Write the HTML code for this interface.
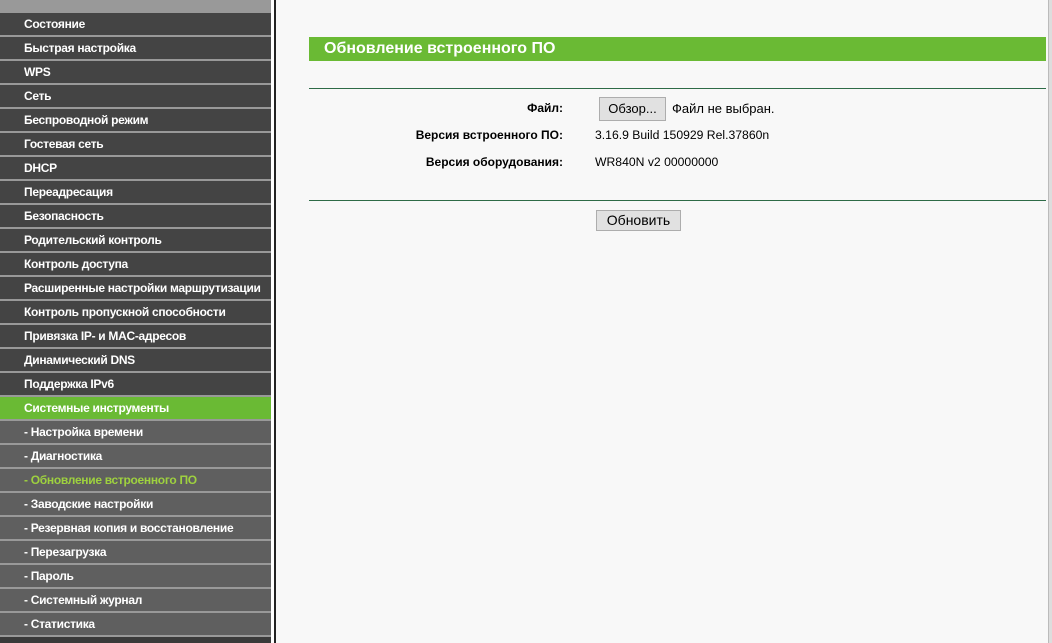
<!DOCTYPE html>
<html style="overflow:hidden;width:1052px;height:643px"><head><meta charset="utf-8"><style>
*{margin:0;padding:0;box-sizing:border-box}
body{width:1052px;height:643px;overflow:hidden;background:#f8f8f8;font-family:"Liberation Sans",Arial,sans-serif;position:relative}
#side{position:absolute;left:0;top:0;width:271px;height:643px;background:#999;overflow:hidden}
.it{position:absolute;left:0;width:271px;height:22px;line-height:22px;color:#fff;font-size:12px;font-weight:bold;padding-left:24px;background:#444;white-space:nowrap;letter-spacing:-0.3px}
.sub{background:#5f5f5f}
.act{background:#6aba34}
.cur{color:#9ed13f}
#gap{position:absolute;left:271px;top:0;width:3px;height:643px;background:#fff}
#bl{position:absolute;left:274px;top:0;width:2px;height:643px;background:#222}
#sb{position:absolute;left:1048px;top:0;width:4px;height:643px;background:#ddd;border-left:1px solid #bbb}
#title{position:absolute;left:309px;top:37px;width:737px;height:24px;background:#6aba34;color:#fff;font-weight:bold;font-size:16px;line-height:24px;padding-left:15px}
.hr{position:absolute;left:309px;width:737px;height:1px;background:#2e6b47}
.lbl{position:absolute;right:489px;font-size:12px;font-weight:bold;color:#000}
.val{position:absolute;left:595px;font-size:12.2px;color:#000}
.btn{position:absolute;background:#e1e1e1;border:1px solid #adadad;font-size:13px;text-align:center;color:#000}
</style></head><body>
<div id="side">
<div class="it" style="top:13px">Состояние</div>
<div class="it" style="top:37px">Быстрая настройка</div>
<div class="it" style="top:61px">WPS</div>
<div class="it" style="top:85px">Сеть</div>
<div class="it" style="top:109px">Беспроводной режим</div>
<div class="it" style="top:133px">Гостевая сеть</div>
<div class="it" style="top:157px">DHCP</div>
<div class="it" style="top:181px">Переадресация</div>
<div class="it" style="top:205px">Безопасность</div>
<div class="it" style="top:229px">Родительский контроль</div>
<div class="it" style="top:253px">Контроль доступа</div>
<div class="it" style="top:277px">Расширенные настройки маршрутизации</div>
<div class="it" style="top:301px">Контроль пропускной способности</div>
<div class="it" style="top:325px">Привязка IP- и MAC-адресов</div>
<div class="it" style="top:349px">Динамический DNS</div>
<div class="it" style="top:373px">Поддержка IPv6</div>
<div class="it act" style="top:397px">Системные инструменты</div>
<div class="it sub" style="top:421px">- Настройка времени</div>
<div class="it sub" style="top:445px">- Диагностика</div>
<div class="it sub cur" style="top:469px">- Обновление встроенного ПО</div>
<div class="it sub" style="top:493px">- Заводские настройки</div>
<div class="it sub" style="top:517px">- Резервная копия и восстановление</div>
<div class="it sub" style="top:541px">- Перезагрузка</div>
<div class="it sub" style="top:565px">- Пароль</div>
<div class="it sub" style="top:589px">- Системный журнал</div>
<div class="it sub" style="top:613px">- Статистика</div>
<div class="it" style="top:637px;height:6px;background:#3a3a3a"></div>
</div>
<div id="gap"></div><div id="bl"></div><div id="sb"></div>
<div id="title">Обновление встроенного ПО</div>
<div class="hr" style="top:88px"></div>
<div class="lbl" style="top:101px">Файл:</div>
<div class="btn" style="left:599px;top:97px;width:67px;height:24px;line-height:22px">Обзор...</div>
<div class="val" style="left:672px;top:101px;font-size:13px">Файл не выбран.</div>
<div class="lbl" style="top:128px">Версия встроенного ПО:</div>
<div class="val" style="top:128px">3.16.9 Build 150929 Rel.37860n</div>
<div class="lbl" style="top:155px">Версия оборудования:</div>
<div class="val" style="top:155px">WR840N v2 00000000</div>
<div class="hr" style="top:200px"></div>
<div class="btn" style="left:596px;top:210px;width:85px;height:21px;line-height:19px;font-size:14px">Обновить</div>
</body></html>
